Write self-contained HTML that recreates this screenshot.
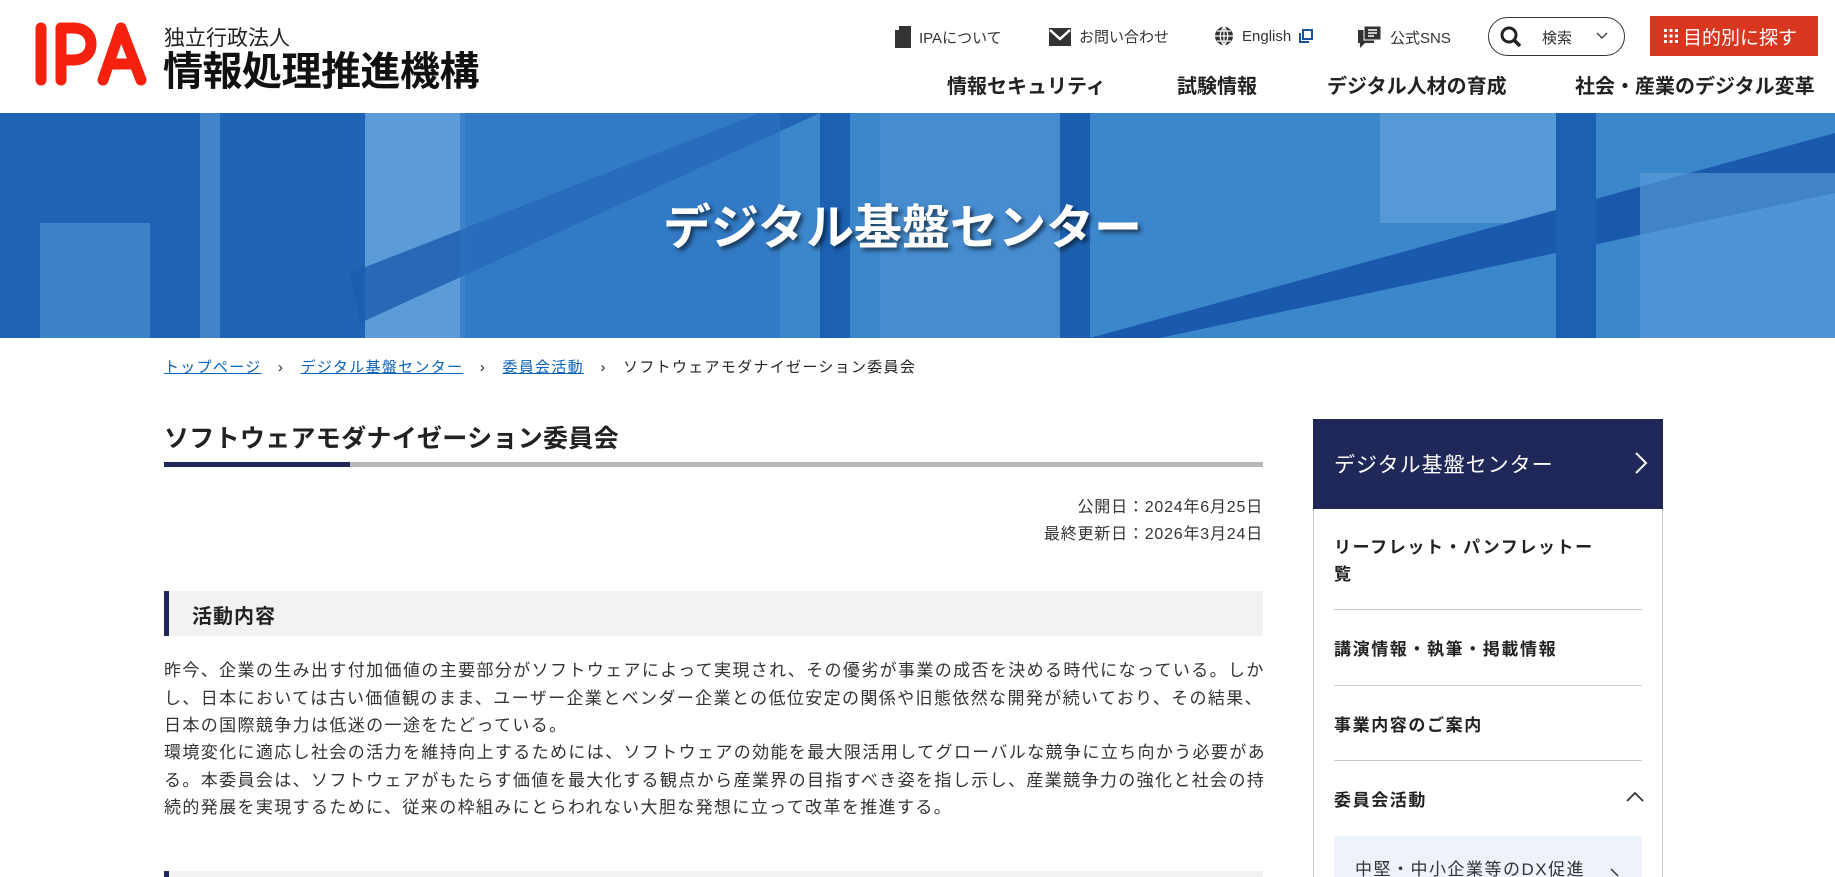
<!DOCTYPE html>
<html style="overflow:hidden;height:877px"><head><meta charset="utf-8"><style>
*{margin:0;padding:0;box-sizing:border-box}
body{width:1835px;height:877px;overflow:hidden;background:#fff;font-family:"Liberation Sans","Noto Sans CJK JP",sans-serif;color:#222;position:relative}
.a{position:absolute;white-space:nowrap}
.util{font-size:15px;color:#333;top:26px;display:flex;align-items:center;gap:8px}
.nav{font-size:20px;font-weight:bold;top:70px;color:#222}
.bc{top:356px;font-size:15px;letter-spacing:1.3px}
.bc a{color:#0b62b8;text-decoration:underline}
.p{left:164px;font-size:17px;letter-spacing:1.38px;color:#333}
.side{font-size:17px;font-weight:bold;letter-spacing:1.6px;color:#222}
.sep{position:absolute;left:1334px;width:308px;height:1px;background:#c8c8c8}
</style></head><body>
<!-- header -->
<svg class="a" style="left:33px;top:22px" width="116" height="64" viewBox="0 0 116 64">
<g stroke="#f5200e" stroke-width="11" stroke-linecap="round" stroke-linejoin="round" fill="none">
<path d="M8 6V58"/>
<path d="M28 58V6H40C52 6 58 13 58 22C58 31 52 38 40 38H34"/>
<path d="M70 58L88 6L108 58M78 42H100"/>
</g></svg>
<div class="a" style="left:164px;top:22px;font-size:21px;color:#222">独立行政法人</div>
<div class="a" style="left:163px;top:39px;font-size:40px;font-weight:bold;color:#111;letter-spacing:-0.5px">情報処理推進機構</div>

<div class="a util" style="left:895px"><svg width="16" height="22" viewBox="0 0 16 22"><path d="M4 0H16V22H0V4Z" fill="#333"/><path d="M0 4H4V0Z" fill="#fff"/></svg>IPAについて</div>
<div class="a util" style="left:1049px"><svg width="22" height="18" viewBox="0 0 22 18"><rect width="22" height="18" fill="#333"/><path d="M1 2L11 11L21 2" stroke="#fff" stroke-width="2.5" fill="none"/></svg>お問い合わせ</div>
<div class="a util" style="left:1214px"><svg width="20" height="20" viewBox="0 0 20 20"><circle cx="10" cy="10" r="9" fill="#333"/><path d="M10 1V19M1 10H19M3 5H17M3 15H17M10 1C5 6 5 14 10 19M10 1C15 6 15 14 10 19" stroke="#fff" stroke-width="1.2" fill="none"/></svg>English<svg width="14" height="14" viewBox="0 0 14 14"><rect x="4" y="1" width="9" height="9" fill="none" stroke="#1d4fa0" stroke-width="2"/><path d="M1 4V13H10" fill="none" stroke="#1d4fa0" stroke-width="2"/></svg></div>
<div class="a util" style="left:1358px"><svg width="24" height="22" viewBox="0 0 24 22"><rect x="0" y="4" width="16" height="13" fill="#333"/><rect x="6" y="0" width="17" height="14" fill="#333" stroke="#fff" stroke-width="1"/><path d="M10 4H19M10 7H19M10 10H16" stroke="#fff" stroke-width="1.5"/><path d="M2 17V22L7 17Z" fill="#333"/></svg>公式SNS</div>
<div class="a" style="left:1488px;top:17px;width:137px;height:39px;border:1.5px solid #333;border-radius:20px"></div>
<svg class="a" style="left:1500px;top:26px" width="22" height="22" viewBox="0 0 22 22"><circle cx="9" cy="9" r="7" fill="none" stroke="#222" stroke-width="3"/><path d="M14 14L20 20" stroke="#222" stroke-width="3.5"/></svg>
<div class="a" style="left:1542px;top:27px;font-size:15px;color:#333">検索</div>
<svg class="a" style="left:1596px;top:32px" width="12" height="8" viewBox="0 0 12 8"><path d="M1 1L6 6L11 1" stroke="#333" fill="none" stroke-width="1.3"/></svg>
<div class="a" style="left:1650px;top:16px;width:168px;height:40px;background:#d9361f"></div>
<svg class="a" style="left:1664px;top:29px" width="14" height="14" viewBox="0 0 14 14" fill="#fff"><rect x="0" y="0" width="3" height="3"/><rect x="5.5" y="0" width="3" height="3"/><rect x="11" y="0" width="3" height="3"/><rect x="0" y="5.5" width="3" height="3"/><rect x="5.5" y="5.5" width="3" height="3"/><rect x="11" y="5.5" width="3" height="3"/><rect x="0" y="11" width="3" height="3"/><rect x="5.5" y="11" width="3" height="3"/><rect x="11" y="11" width="3" height="3"/></svg>
<div class="a" style="left:1683px;top:23px;font-size:19px;color:#fff">目的別に探す</div>

<div class="a nav" style="left:947px">情報セキュリティ</div>
<div class="a nav" style="left:1177px">試験情報</div>
<div class="a nav" style="left:1327px">デジタル人材の育成</div>
<div class="a nav" style="left:1575px">社会・産業のデジタル変革</div>

<!-- banner -->
<svg class="a" style="left:0;top:113px" width="1835" height="225" viewBox="0 0 1835 225">
<rect width="1835" height="225" fill="#3c86cc"/>
<rect x="0" y="0" width="365" height="225" fill="#1f64b4"/>
<rect x="40" y="110" width="110" height="115" fill="#4a90d2" opacity=".7"/>
<rect x="200" y="0" width="20" height="225" fill="#5a9ad6" opacity=".6"/>
<rect x="365" y="0" width="100" height="225" fill="#5a9bd8"/>
<path d="M350 160L760 0H820L360 210Z" fill="#1a5cae" opacity=".8"/>
<rect x="460" y="0" width="320" height="225" fill="#2b73c0" opacity=".6"/>
<rect x="820" y="0" width="30" height="225" fill="#1c60b2"/>
<rect x="880" y="0" width="200" height="225" fill="#4a8fd0" opacity=".7"/>
<rect x="1060" y="0" width="30" height="225" fill="#1c5fae"/>
<rect x="1380" y="0" width="180" height="110" fill="#68a6dd" opacity=".6"/>
<path d="M1090 225L1835 20V80L1160 225Z" fill="#1a5aac"/>
<rect x="1556" y="0" width="40" height="225" fill="#1c60b2"/>
<rect x="1640" y="60" width="195" height="165" fill="#5c9ed9" opacity=".6"/>
</svg>
<div class="a" style="left:663px;top:188px;font-size:48px;font-weight:bold;color:#fff;text-shadow:3px 3px 4px rgba(0,0,0,.55)">デジタル基盤センター</div>

<!-- breadcrumb -->
<div class="a bc" style="left:164px"><a>トップページ</a>&nbsp;&nbsp;&nbsp;›&nbsp;&nbsp;&nbsp;<a>デジタル基盤センター</a>&nbsp;&nbsp;&nbsp;›&nbsp;&nbsp;&nbsp;<a>委員会活動</a>&nbsp;&nbsp;&nbsp;›&nbsp;&nbsp;&nbsp;ソフトウェアモダナイゼーション委員会</div>

<div class="a" style="left:164px;top:419px;font-size:25px;font-weight:bold;color:#222;letter-spacing:0.3px">ソフトウェアモダナイゼーション委員会</div>
<div class="a" style="left:164px;top:462px;width:1099px;height:5px;background:#b8b8b8"></div>
<div class="a" style="left:164px;top:462px;width:186px;height:5px;background:#1f2858"></div>
<div class="a" style="right:572px;top:494px;font-size:16px;color:#333;text-align:right;line-height:27px;letter-spacing:0.8px">公開日：2024年6月25日<br>最終更新日：2026年3月24日</div>

<div class="a" style="left:164px;top:591px;width:1099px;height:45px;background:#f2f2f2;border-left:5px solid #1f2858"></div>
<div class="a" style="left:192px;top:600px;font-size:20px;font-weight:bold;color:#222;letter-spacing:1px">活動内容</div>

<div class="a p" style="top:656px">昨今、企業の生み出す付加価値の主要部分がソフトウェアによって実現され、その優劣が事業の成否を決める時代になっている。しか</div>
<div class="a p" style="top:684px">し、日本においては古い価値観のまま、ユーザー企業とベンダー企業との低位安定の関係や旧態依然な開発が続いており、その結果、</div>
<div class="a p" style="top:711px">日本の国際競争力は低迷の一途をたどっている。</div>
<div class="a p" style="top:738px">環境変化に適応し社会の活力を維持向上するためには、ソフトウェアの効能を最大限活用してグローバルな競争に立ち向かう必要があ</div>
<div class="a p" style="top:766px">る。本委員会は、ソフトウェアがもたらす価値を最大化する観点から産業界の目指すべき姿を指し示し、産業競争力の強化と社会の持</div>
<div class="a p" style="top:793px">続的発展を実現するために、従来の枠組みにとらわれない大胆な発想に立って改革を推進する。</div>

<div class="a" style="left:164px;top:871px;width:1099px;height:6px;background:#f2f2f2;border-left:5px solid #1f2858"></div>

<!-- sidebar -->
<div class="a" style="left:1313px;top:419px;width:350px;height:470px;border:1px solid #c8c8c8"></div>
<div class="a" style="left:1313px;top:419px;width:350px;height:90px;background:#1f2858"></div>
<div class="a" style="left:1334px;top:449px;font-size:21px;color:#fff;letter-spacing:1px">デジタル基盤センター</div>
<svg class="a" style="left:1634px;top:451px" width="14" height="24" viewBox="0 0 14 24"><path d="M2 2L12 12L2 22" stroke="#fff" stroke-width="2" fill="none"/></svg>
<div class="a side" style="left:1334px;top:534px;line-height:27px">リーフレット・パンフレットー<br>覧</div>
<div class="sep" style="top:609px"></div>
<div class="a side" style="left:1334px;top:635px">講演情報・執筆・掲載情報</div>
<div class="sep" style="top:685px"></div>
<div class="a side" style="left:1334px;top:711px">事業内容のご案内</div>
<div class="sep" style="top:760px"></div>
<div class="a side" style="left:1334px;top:786px">委員会活動</div>
<svg class="a" style="left:1626px;top:791px" width="18" height="11" viewBox="0 0 18 11"><path d="M1 10L9 2L17 10" stroke="#333" stroke-width="1.8" fill="none"/></svg>
<div class="a" style="left:1334px;top:836px;width:308px;height:41px;background:#eef3fb"></div>
<div class="a" style="left:1355px;top:855px;font-size:17px;color:#333;letter-spacing:1.5px">中堅・中小企業等のDX促進</div>
<svg class="a" style="left:1610px;top:868px" width="10" height="9" viewBox="0 0 10 9"><path d="M1 1L8 8" stroke="#333" stroke-width="1.5" fill="none"/></svg>
</body></html>
